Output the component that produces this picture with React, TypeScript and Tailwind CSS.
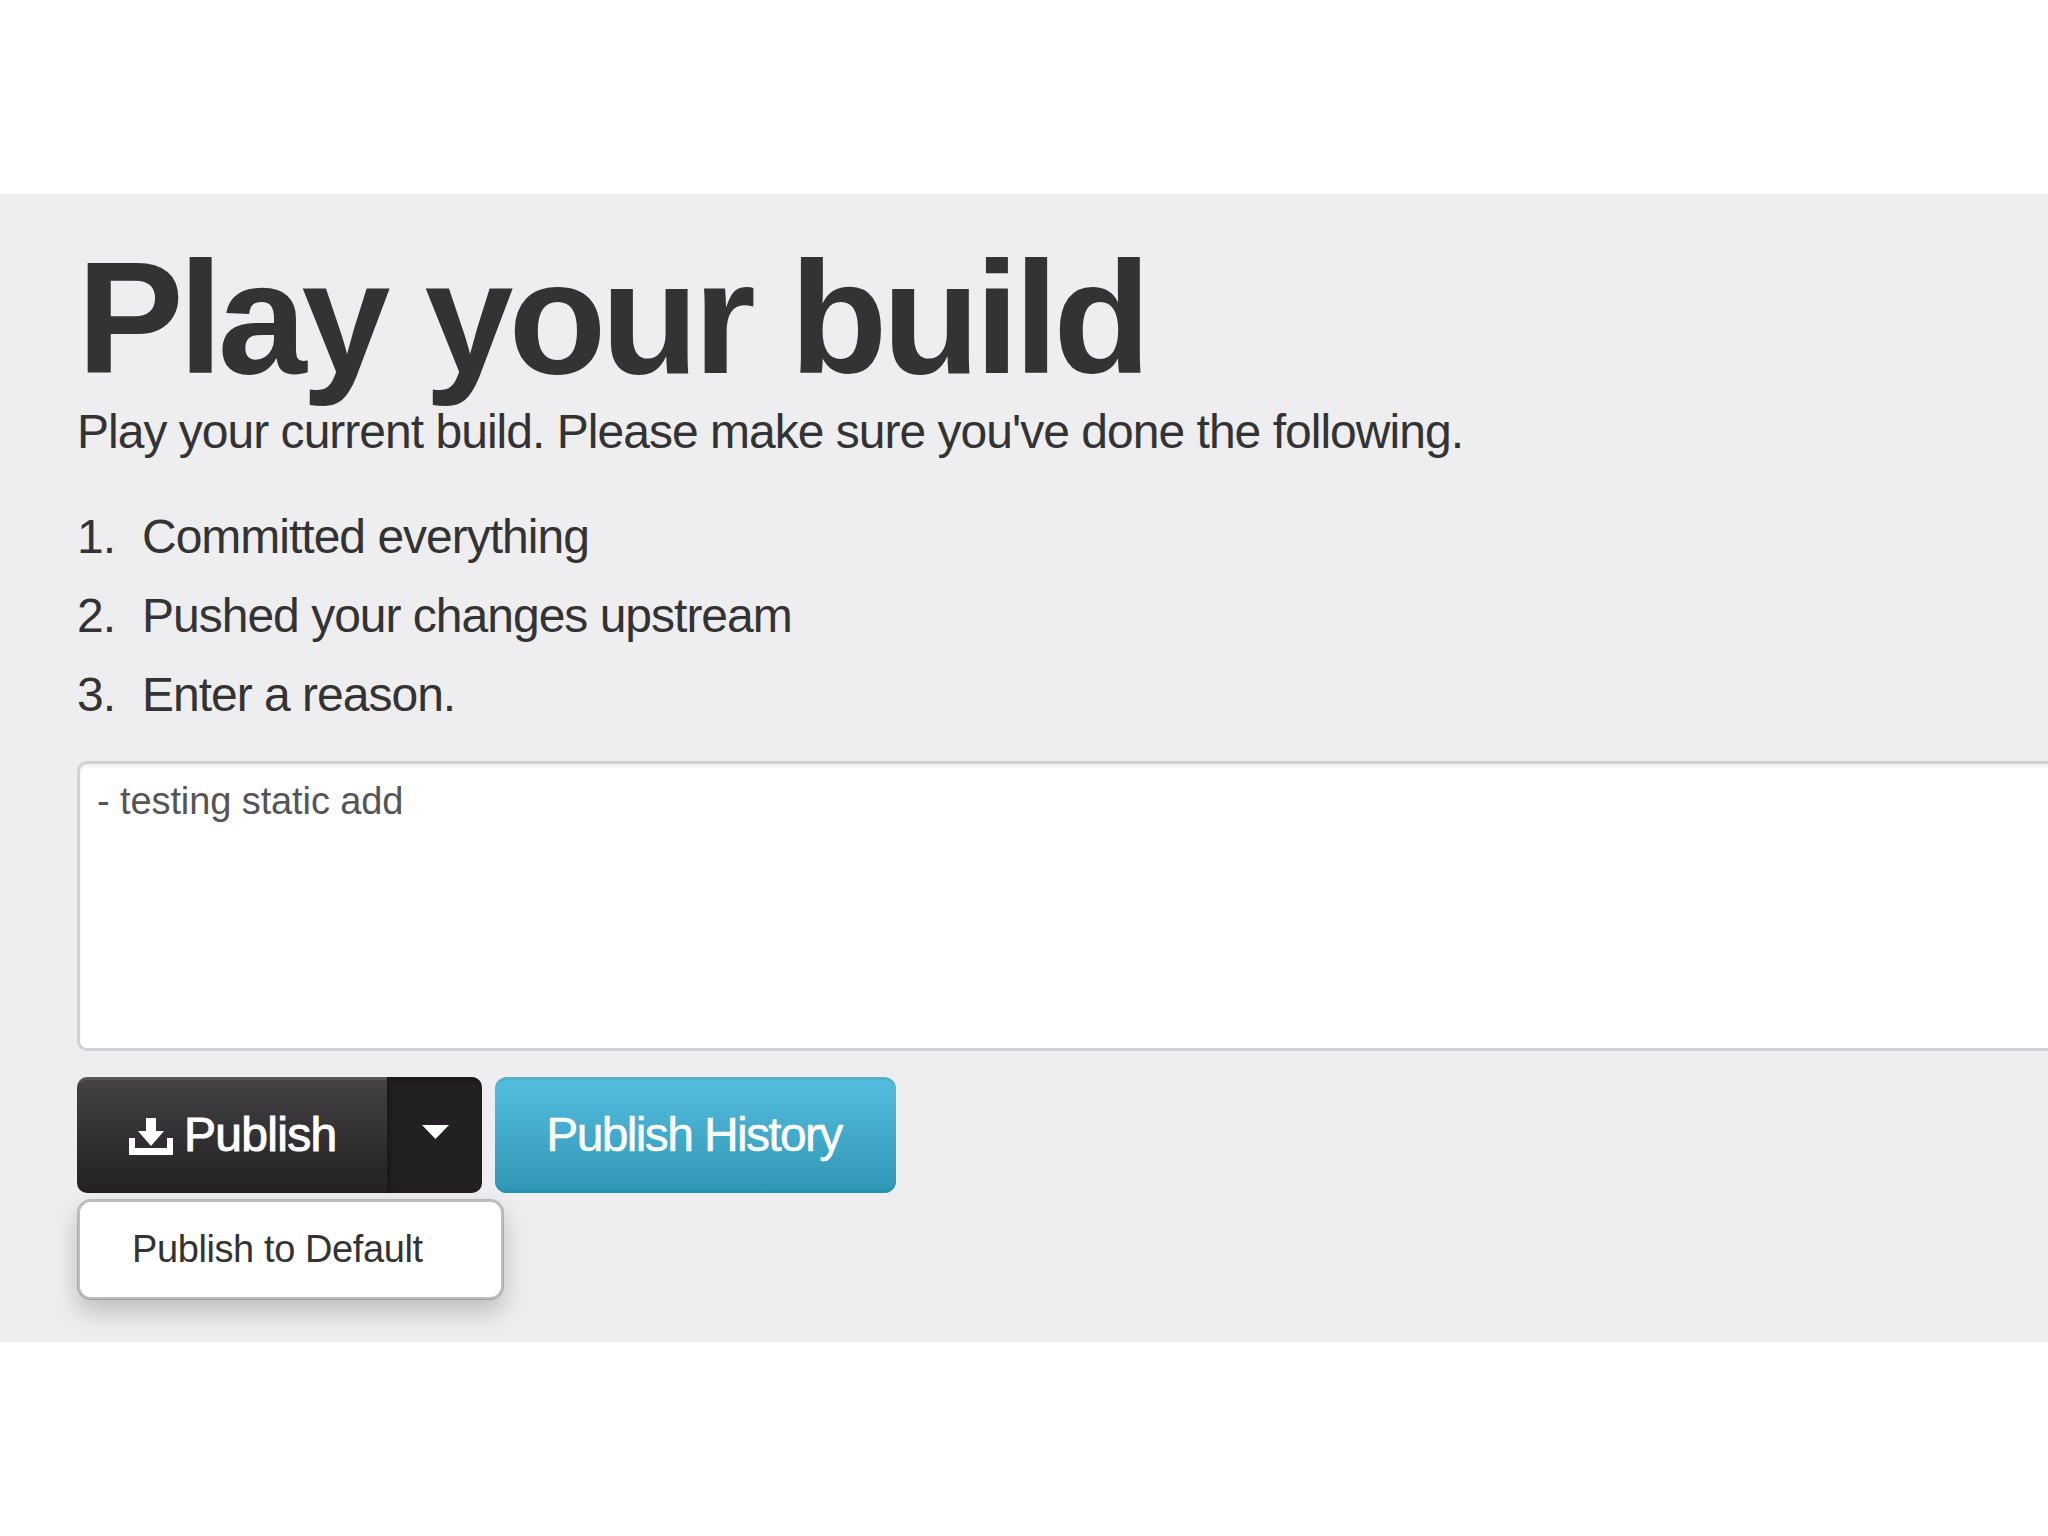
const steps = ["Committed everything", "Pushed your changes upstream", "Enter a reason."];

const DownloadIcon = () => (
  <svg viewBox="0 0 44 38" className="mt-[3px] h-[38px] w-[44px]" fill="currentColor">
    <path d="M17 0h10v13h8L22 28 9 13h8z" />
    <path d="M0 20h6v10h32V20h6v17H0z" />
  </svg>
);

const Caret = () => (
  <svg viewBox="0 0 27 14" className="mb-[7px] ml-[2px] h-[14px] w-[27px]" fill="currentColor">
    <path d="M0 0h27L13.500 14z" />
  </svg>
);

const PublishMenu = () => (
  <div className="absolute top-[122px] left-0 h-[101px] w-[427px] rounded-[14px] border-[3px] border-black/20 bg-white bg-clip-padding pl-[52px] text-[38px] leading-[94px] tracking-[-0.4px] text-[#333333] shadow-[0_12px_24px_rgba(0,0,0,0.2)]">
    Publish to Default
  </div>
);

const App = () => {
  return (
    <div className="h-[1536px] w-full overflow-hidden bg-white pt-[194px] font-['Liberation_Sans',sans-serif] text-[#333333]">
      <main className="h-[1148px] overflow-hidden bg-[#eeedef] pt-[44px] pl-[77px]">
        <h1 className="text-[160px] leading-[160px] font-bold tracking-[-5.2px]">
          Play your build
        </h1>
        <p className="mt-[6px] text-[48px] leading-[56px] tracking-[-0.98px]">
          Play your current build. Please make sure you've done the following.
        </p>
        <ol className="mt-[37px] text-[48px] leading-[79px] tracking-[-1px]">
          {steps.map((step, i) => (
            <li key={step} className="flex">
              <span className="w-[65px]">{i + 1}.</span>
              <span>{step}</span>
            </li>
          ))}
        </ol>
        <div className="mt-[27px] -mr-4 h-[290px] rounded-l-[10px] border-[3px] border-r-0 border-[#d2d1d4] bg-white px-[17px] pt-[14px] text-[38px] leading-[46px] tracking-[-0.1px] text-[#555555] shadow-[inset_0_3px_3px_rgba(0,0,0,0.06)]">
          - testing static add
        </div>
        <div className="mt-[26px] flex gap-[13px] text-[48px] text-white">
          <div className="relative flex h-[116px] w-[405px]">
            <button className="flex w-[310px] items-center gap-[11px] rounded-l-[10px] bg-linear-to-b from-[#444244] to-[#222022] pl-[52px] tracking-[-0.7px] shadow-[inset_0_3px_0_rgba(255,255,255,0.1)]">
              <DownloadIcon />
              <span className="[-webkit-text-stroke:1px_white]">Publish</span>
            </button>
            <button className="flex flex-1 items-center justify-center rounded-r-[10px] bg-[#222022] shadow-[inset_3px_3px_6px_rgba(0,0,0,0.3)]">
              <Caret />
            </button>
            <PublishMenu />
          </div>
          <button className="flex w-[401px] items-center justify-center rounded-[12px] bg-linear-to-b from-[#55bedf] to-[#2f96b6] pr-[3px] tracking-[-1.65px] shadow-[inset_0_3px_0_rgba(90,150,180,0.4),inset_0_-3px_0_#2395b3] [-webkit-text-stroke:0.5px_white]">
            Publish History
          </button>
        </div>
      </main>
    </div>
  );
};

export default App;
